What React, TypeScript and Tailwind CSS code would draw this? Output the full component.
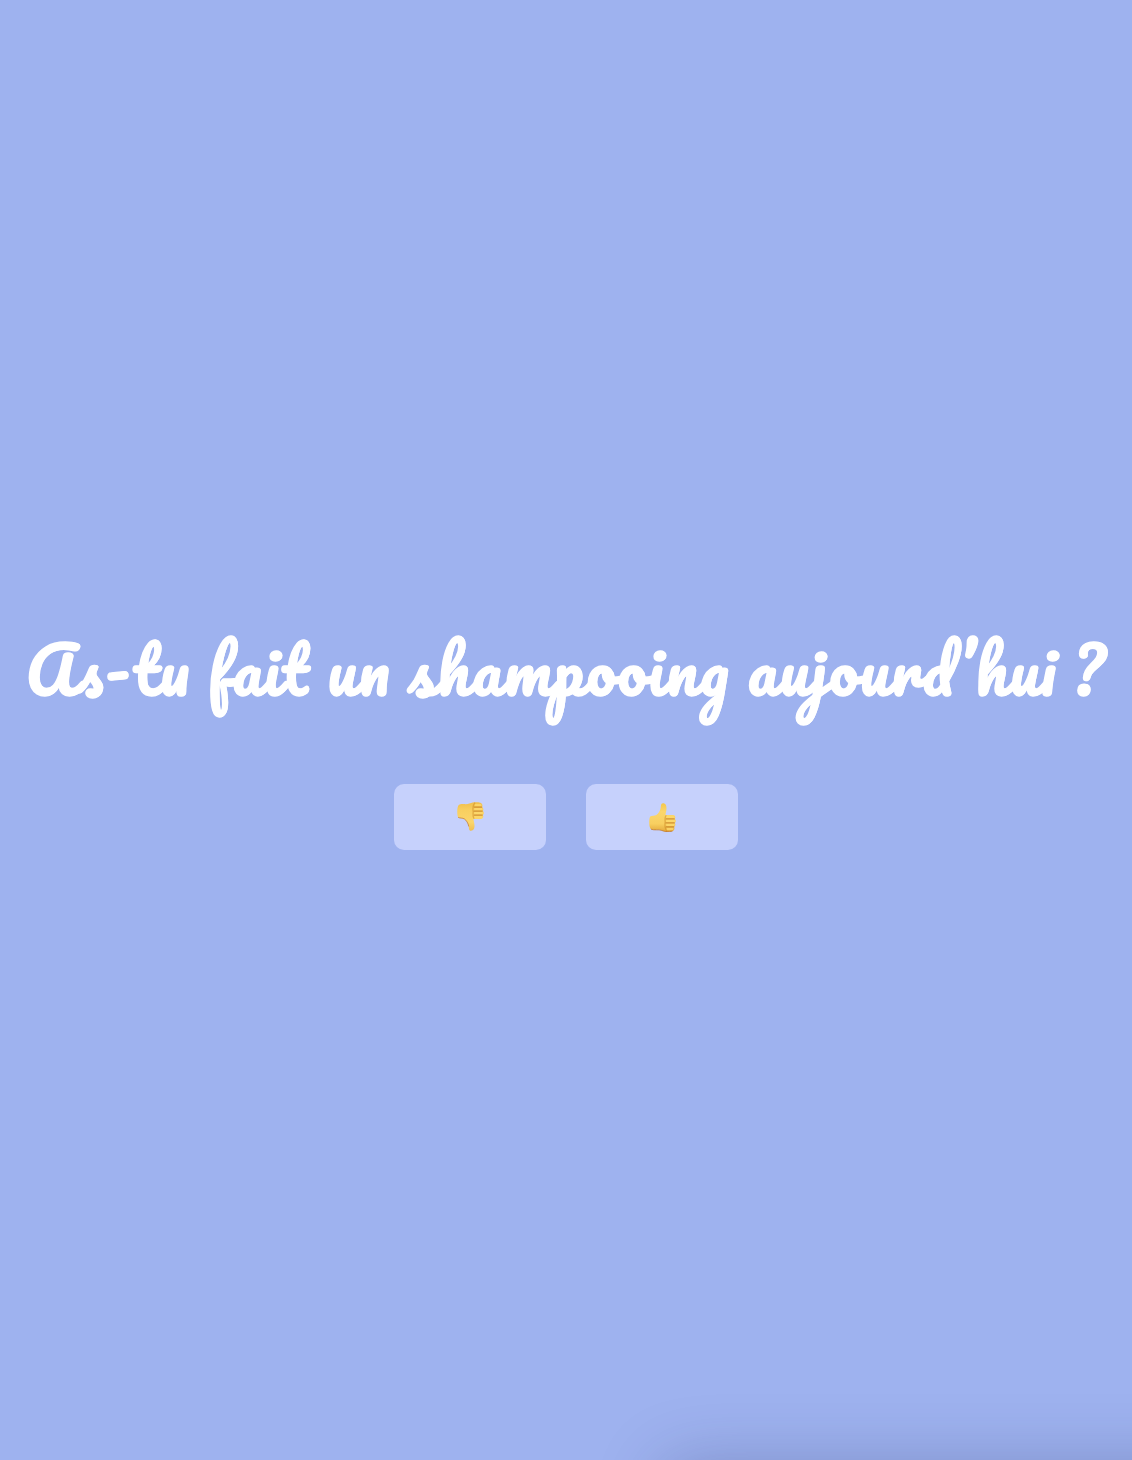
function Thumb({ down = false }: { down?: boolean }) {
  const id = down ? "down" : "up";
  return (
    <svg viewBox="0 0 27 29" className="h-[29px] w-[27px]" aria-hidden="true">
      <defs>
        <linearGradient id={id} x1="0" y1="0" x2="0" y2="1">
          <stop offset="0" stopColor={down ? "#f0be50" : "#f5c74b"} />
          <stop offset=".3" stopColor="#fbd66c" />
          <stop offset=".72" stopColor="#f8cf60" />
          <stop offset="1" stopColor={down ? "#f0bf4c" : "#e3a93c"} />
        </linearGradient>
      </defs>
      <g transform={down ? "translate(0 29) scale(1 -1)" : undefined}>
        <path d="M1.2 13.6C3 12.6 5.6 13.2 7.3 12.1C9.4 10.8 11.2 7.7 11.7 5.1C12 3.4 11.6 .3 14 .3C16.6 .3 17.5 2.6 17.5 5.2C17.5 7.8 16.6 10 16.5 12.1L24 12C26.4 12 27 15.1 25.6 15.8C27.2 16.6 27.2 19.2 25.7 19.9C26.8 20.7 26.5 23.2 25 23.9C26 24.9 25.4 27.6 23.4 28.2C20 28.9 16 28.9 12.5 27.4C9.4 26.2 5.5 27.6 2 26.2C-.2 24.6-.2 15.8 1.2 13.6Z" fill={`url(#${id})`} />
        <path d="M17.2 12.4C15.6 14.1 16 17.3 16.2 19C15.7 21.4 16 25.5 17.9 28.4" fill="none" stroke="#cf8c25" strokeWidth="1.3" opacity=".55" />
        <path d="M17.2 15.9H25.3M17 19.9H25.3M17.2 23.9H24.7" fill="none" stroke="#c47d24" strokeWidth="1.1" strokeLinecap="round" opacity=".75" />
        <path d="M18.4 14H24M18.2 18H25M18.2 22H24.6M18.6 26H23.4" fill="none" stroke="#fdd86c" strokeWidth="2" strokeLinecap="round" opacity=".8" />
        <path d={down ? "M1.2 13.6C3 12.6 5.6 13.2 7.3 12.1C9.4 10.8 11.2 7.7 11.8 4.5" : "M2 26.2C5.5 27.6 9.4 26.2 12.5 27.4C16 28.9 20 28.9 23.4 28.2"} fill="none" stroke="#bc6b20" strokeWidth=".9" opacity=".7" />
      </g>
    </svg>
  );
}

export default function App() {
  return (
    <main className="relative flex h-[1460px] w-full flex-col items-center overflow-hidden bg-[#9eb2ef] pt-[621px]">
      <h1 className="font-['Pacifico',cursive] text-[64px] leading-[96px] font-normal tracking-[1.9px] whitespace-nowrap text-white [font-feature-settings:'calt','liga','clig'] [text-shadow:0.9px_0_0_white] [word-spacing:-2px] [-webkit-text-stroke:1.3px_white]">
        <span className="tracking-[1.5px]">As-tu</span> fait un <span className="tracking-[2.05px]">shampooing</span> <span className="tracking-[1.85px]">aujourd’hui</span> ?
      </h1>
      <div className="mt-[67px] flex gap-10">
        <button aria-label="Non" className="flex h-[66px] w-[152px] items-center justify-center rounded-[10px] bg-[#c6d1fc] pb-px"><Thumb down /></button>
        <button aria-label="Oui" className="flex h-[66px] w-[152px] items-center justify-center rounded-[10px] bg-[#c6d1fc] pt-px"><Thumb /></button>
      </div>
      <div className="pointer-events-none absolute top-[1463px] left-[662px] h-[200px] w-[700px] rounded-[24px] shadow-[0_0_66px_rgba(30,40,90,0.26)]" />
    </main>
  );
}
